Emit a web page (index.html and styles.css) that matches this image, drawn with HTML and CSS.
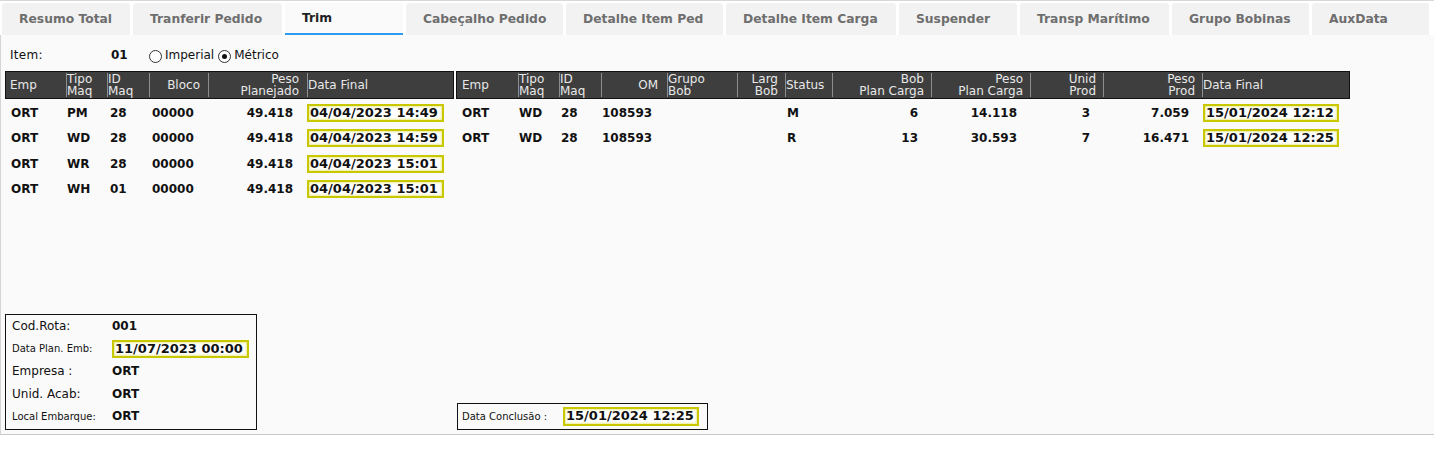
FILE: index.html
```html
<!DOCTYPE html>
<html lang="pt">
<head>
<meta charset="utf-8">
<title>Trim</title>
<link rel="stylesheet" href="styles.css">
</head>
<body>
<div class="topline"></div>
<nav class="tabs">
  <div class="tab t1">Resumo Total</div>
  <div class="tab t2">Tranferir Pedido</div>
  <div class="tab t3 active">Trim</div>
  <div class="tab t4">Cabeçalho Pedido</div>
  <div class="tab t5">Detalhe Item Ped</div>
  <div class="tab t6">Detalhe Item Carga</div>
  <div class="tab t7">Suspender</div>
  <div class="tab t8">Transp Marítimo</div>
  <div class="tab t9">Grupo Bobinas</div>
  <div class="tab t10">AuxData</div>
</nav>
<main class="panel">
  <div class="item-row">
    <span class="item-label">Item:</span>
    <span class="item-val">01</span>
    <span class="radio"></span><span class="radio-label">Imperial</span>
    <span class="radio checked"></span><span class="radio-label">Métrico</span>
  </div>

  <div class="tables">
    <div class="grid gleft">
      <div class="ghead">
        <div class="h c1">Emp</div>
        <div class="h c2">Tipo<br>Maq</div>
        <div class="h c3">ID<br>Maq</div>
        <div class="h c4 r">Bloco</div>
        <div class="h c5 r">Peso<br>Planejado</div>
        <div class="h c6">Data Final</div>
      </div>
      <div class="grow">
        <div class="d c1">ORT</div><div class="d c2">PM</div><div class="d c3">28</div><div class="d c4">00000</div><div class="d c5 r">49.418</div><div class="d c6"><span class="date">04/04/2023 14:49</span></div>
      </div>
      <div class="grow">
        <div class="d c1">ORT</div><div class="d c2">WD</div><div class="d c3">28</div><div class="d c4">00000</div><div class="d c5 r">49.418</div><div class="d c6"><span class="date">04/04/2023 14:59</span></div>
      </div>
      <div class="grow">
        <div class="d c1">ORT</div><div class="d c2">WR</div><div class="d c3">28</div><div class="d c4">00000</div><div class="d c5 r">49.418</div><div class="d c6"><span class="date">04/04/2023 15:01</span></div>
      </div>
      <div class="grow">
        <div class="d c1">ORT</div><div class="d c2">WH</div><div class="d c3">01</div><div class="d c4">00000</div><div class="d c5 r">49.418</div><div class="d c6"><span class="date">04/04/2023 15:01</span></div>
      </div>
    </div>

    <div class="grid gright">
      <div class="ghead">
        <div class="h k1">Emp</div>
        <div class="h k2">Tipo<br>Maq</div>
        <div class="h k3">ID<br>Maq</div>
        <div class="h k4 r">OM</div>
        <div class="h k5">Grupo<br>Bob</div>
        <div class="h k6 r">Larg<br>Bob</div>
        <div class="h k7">Status</div>
        <div class="h k8 r">Bob<br>Plan Carga</div>
        <div class="h k9 r">Peso<br>Plan Carga</div>
        <div class="h k10 r">Unid<br>Prod</div>
        <div class="h k11 r">Peso<br>Prod</div>
        <div class="h k12">Data Final</div>
      </div>
      <div class="grow">
        <div class="d k1">ORT</div><div class="d k2">WD</div><div class="d k3">28</div><div class="d k4">108593</div><div class="d k5"></div><div class="d k6"></div><div class="d k7">M</div><div class="d k8 r">6</div><div class="d k9 r">14.118</div><div class="d k10 r">3</div><div class="d k11 r">7.059</div><div class="d k12"><span class="date">15/01/2024 12:12</span></div>
      </div>
      <div class="grow">
        <div class="d k1">ORT</div><div class="d k2">WD</div><div class="d k3">28</div><div class="d k4">108593</div><div class="d k5"></div><div class="d k6"></div><div class="d k7">R</div><div class="d k8 r">13</div><div class="d k9 r">30.593</div><div class="d k10 r">7</div><div class="d k11 r">16.471</div><div class="d k12"><span class="date">15/01/2024 12:25</span></div>
      </div>
    </div>
  </div>

  <div class="bottom">
    <div class="infobox">
      <div class="irow"><span class="ilabel">Cod.Rota:</span><span class="ival">001</span></div>
      <div class="irow"><span class="ilabel small">Data Plan. Emb:</span><span class="date">11/07/2023 00:00</span></div>
      <div class="irow"><span class="ilabel">Empresa :</span><span class="ival">ORT</span></div>
      <div class="irow"><span class="ilabel">Unid. Acab:</span><span class="ival">ORT</span></div>
      <div class="irow"><span class="ilabel small">Local Embarque:</span><span class="ival">ORT</span></div>
    </div>
    <div class="conc">
      <span class="clabel">Data Conclusão :</span><span class="date">15/01/2024 12:25</span>
    </div>
  </div>
</main>
</body>
</html>
```

FILE: styles.css
```css
* { box-sizing: border-box; }
html, body { margin: 0; padding: 0; background: #ffffff; }
body {
  font-family: "DejaVu Sans", Verdana, sans-serif;
  font-size: 12px;
  color: #111;
  width: 1434px;
}
.topline { height: 1px; background: #d8d8d8; }

/* tabs */
.tabs {
  display: flex;
  gap: 3px;
  margin-top: 2px;
  padding-left: 2px;
  height: 32px;
}
.tab {
  height: 32px;
  background: #f2f2f2;
  border-radius: 3px 3px 0 0;
  padding-left: 17px;
  font-weight: bold;
  font-size: 12.3px;
  color: #6e6e6e;
  line-height: 32px;
  white-space: nowrap;
}
.tab.active {
  background: #fafafa;
  color: #222;
  line-height: 30px;
  border-bottom: 2px solid #2d9bf0;
  border-radius: 0;
}
.t1 { width: 128px; }
.t2 { width: 149px; }
.t3 { width: 118px; }
.t4 { width: 157px; }
.t5 { width: 157px; }
.t6 { width: 170px; }
.t7 { width: 118px; }
.t8 { width: 149px; }
.t9 { width: 137px; }
.t10 { width: 117px; }

/* panel */
.panel {
  height: 400px;
  background: #fafafa;
  border-left: 1px solid #d4d4d4;
  border-bottom: 1px solid #c8c8c8;
  padding: 0 4px 4px 4px;
  display: flex;
  flex-direction: column;
}
.item-row {
  height: 36px;
  padding: 3px 0 0 5px;
  display: flex;
  align-items: center;
  font-size: 12px;
}
.item-label { width: 101px; letter-spacing: 0.3px; }
.item-val { width: 38px; font-weight: bold; }
.radio {
  width: 13px; height: 13px;
  border: 1px solid #333;
  border-radius: 50%;
  background: #fff;
  margin-top: 3px;
  position: relative;
}
.radio.checked::after {
  content: "";
  position: absolute;
  left: 3px; top: 3px;
  width: 5px; height: 5px;
  border-radius: 50%;
  background: #111;
}
.radio-label { margin: 0 4px 0 3px; }

/* tables */
.tables {
  display: flex;
  gap: 2px;
  align-items: flex-start;
}
.grid { display: flex; flex-direction: column; }
.gleft { width: 449px; }
.gright { width: 894px; }
.ghead, .grow { display: grid; }
.gleft .ghead, .gleft .grow { grid-template-columns: 60px 41px 42px 59px 99px 146px; }
.gright .ghead, .gright .grow { grid-template-columns: 61px 41px 42px 66px 70px 48px 47px 99px 99px 73px 99px 147px; }

.ghead {
  height: 28px;
  background: #3e3e3e;
  border: 1px solid #111;
  padding: 1px 0;
  color: #e8e8e8;
  font-size: 12px;
  line-height: 12px;
}
.h {
  display: flex;
  flex-direction: column;
  justify-content: center;
  border-left: 1px solid #8e8e8e;
  white-space: nowrap;
}
.h.r { align-items: flex-end; text-align: right; }
.gleft .c1, .gright .k1 { border-left: none; }
.gleft .h.c1 { padding-left: 4px; }
.gleft .h.c4, .gleft .h.c5 { padding-right: 8px; }
.gright .h.k1 { padding-left: 5px; }
.gright .h.k4 { padding-right: 9px; }
.gright .h.k6, .gright .h.k8, .gright .h.k9, .gright .h.k10, .gright .h.k11 { padding-right: 7px; }

.grow {
  height: 25.5px;
  padding: 0 1px;
  align-items: center;
  font-weight: bold;
  font-size: 12px;
  white-space: nowrap;
}
.ghead + .grow { margin-top: 1px; }
.d.r { text-align: right; }
.gleft .d.c1 { padding-left: 5px; }
.gleft .d.c2 { padding-left: 1px; }
.gleft .d.c3 { padding-left: 3px; }
.gleft .d.c4 { padding-left: 3px; }
.gleft .d.c5 { padding-right: 14px; }
.gleft .d.c6 { display: flex; }
.gright .d.k1 { padding-left: 5px; }
.gright .d.k2 { padding-left: 1px; }
.gright .d.k3 { padding-left: 2px; }
.gright .d.k4 { padding-left: 1px; }
.gright .d.k7 { padding-left: 2px; }
.gright .d.k8, .gright .d.k9, .gright .d.k10, .gright .d.k11 { padding-right: 13px; }
.gright .d.k12 { display: flex; padding-left: 1px; }
.gright .date { width: 136px; }

.date {
  display: inline-block;
  width: 137px;
  height: 18px;
  border: 2px solid #c9c700;
  box-shadow: inset 0 0 2px 1px #ecec98;
  background: #fff;
  font-weight: bold;
  font-size: 13px;
  line-height: 14px;
  padding-left: 1px;
  color: #111;
  white-space: nowrap;
}

/* bottom */
.bottom {
  margin-top: auto;
  display: flex;
  align-items: flex-end;
  gap: 200px;
}
.infobox {
  width: 252px;
  height: 116px;
  border: 1px solid #111;
  padding: 0 0 0 6px;
}
.irow {
  height: 22.5px;
  display: flex;
  align-items: center;
}
.ilabel { width: 100px; font-size: 12px; color: #111; }
.ilabel.small { font-size: 10px; }
.ival { font-weight: bold; font-size: 12px; }
.conc {
  width: 251px;
  height: 27px;
  border: 1px solid #111;
  padding: 0 0 0 4px;
  display: flex;
  align-items: center;
}
.clabel { width: 101px; font-size: 10px; }
.conc .date { width: 136px; height: 19px; }
```
